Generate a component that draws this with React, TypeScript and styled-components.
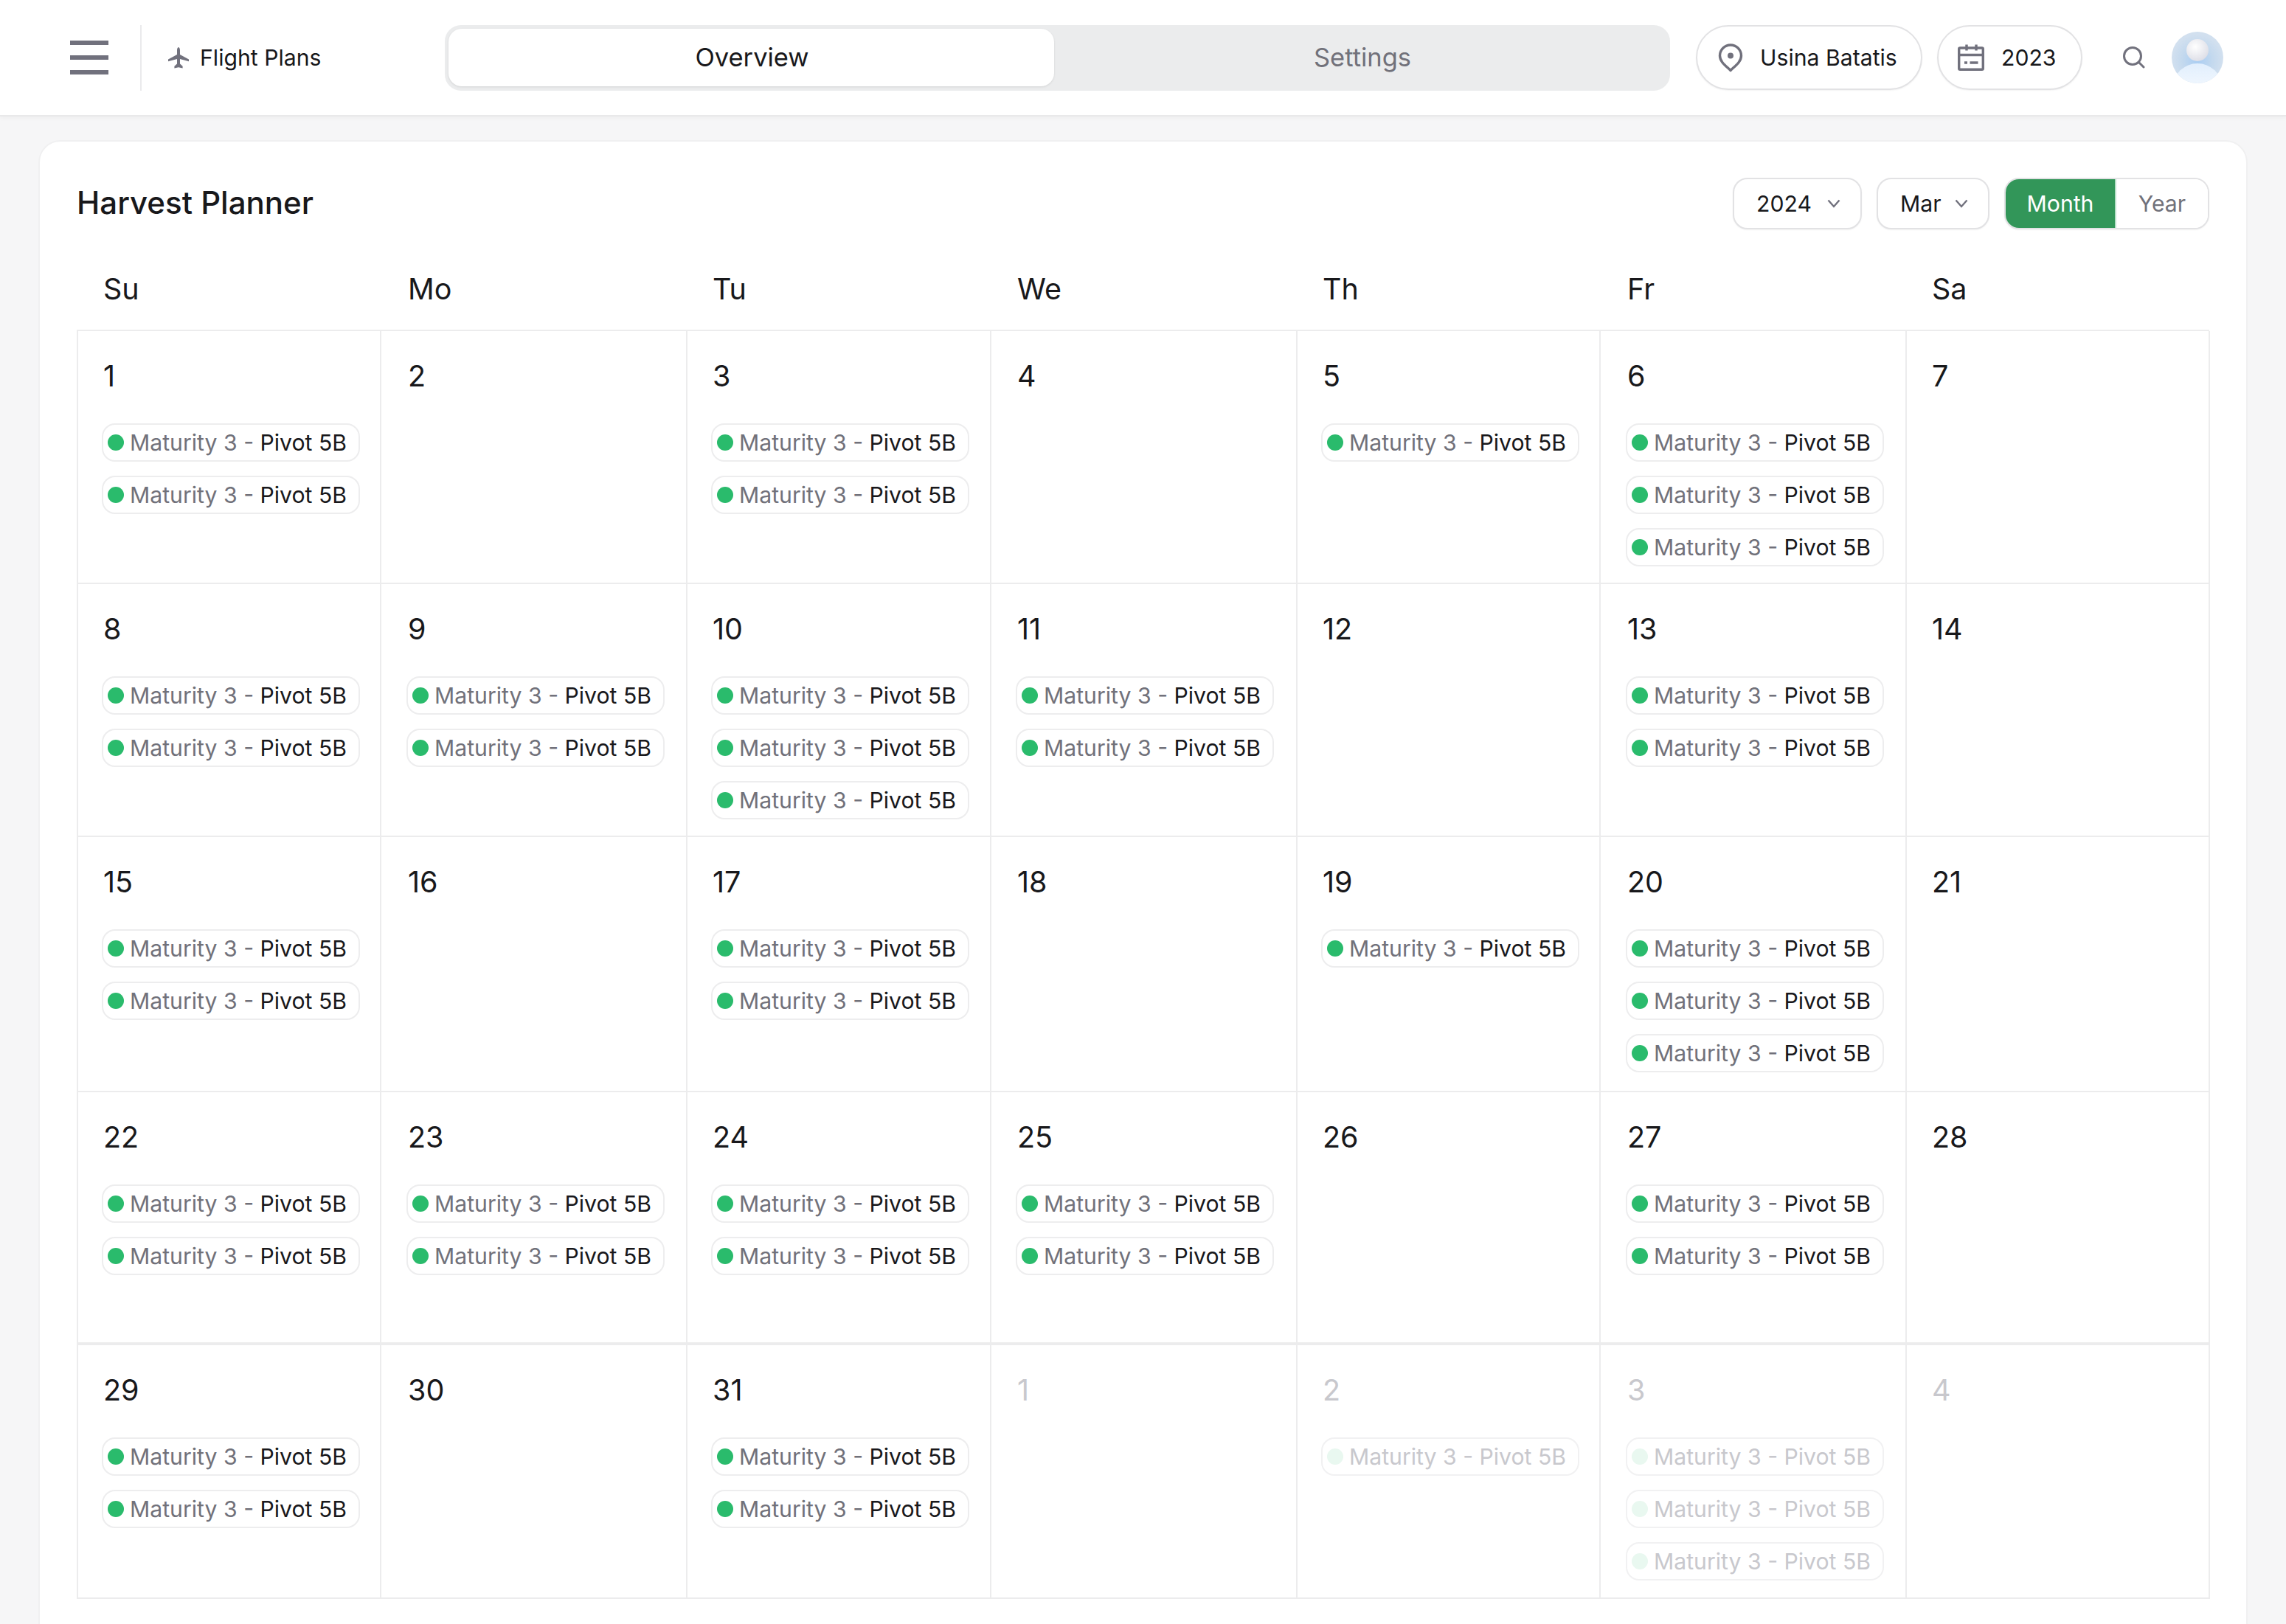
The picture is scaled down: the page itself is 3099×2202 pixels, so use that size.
import React from "react";
import styled, { createGlobalStyle } from "styled-components";

type Day = { label: number; plans: number; muted?: boolean };

const DAYS: Day[] = [
	{ label: 1, plans: 2 },
	{ label: 2, plans: 0 },
	{ label: 3, plans: 2 },
	{ label: 4, plans: 0 },
	{ label: 5, plans: 1 },
	{ label: 6, plans: 3 },
	{ label: 7, plans: 0 },
	{ label: 8, plans: 2 },
	{ label: 9, plans: 2 },
	{ label: 10, plans: 3 },
	{ label: 11, plans: 2 },
	{ label: 12, plans: 0 },
	{ label: 13, plans: 2 },
	{ label: 14, plans: 0 },
	{ label: 15, plans: 2 },
	{ label: 16, plans: 0 },
	{ label: 17, plans: 2 },
	{ label: 18, plans: 0 },
	{ label: 19, plans: 1 },
	{ label: 20, plans: 3 },
	{ label: 21, plans: 0 },
	{ label: 22, plans: 2 },
	{ label: 23, plans: 2 },
	{ label: 24, plans: 2 },
	{ label: 25, plans: 2 },
	{ label: 26, plans: 0 },
	{ label: 27, plans: 2 },
	{ label: 28, plans: 0 },
	{ label: 29, plans: 2 },
	{ label: 30, plans: 0 },
	{ label: 31, plans: 2 },
	{ label: 1, plans: 0, muted: true },
	{ label: 2, plans: 1, muted: true },
	{ label: 3, plans: 3, muted: true },
	{ label: 4, plans: 0, muted: true },
];

const WEEK = ["Su", "Mo", "Tu", "We", "Th", "Fr", "Sa"];

const COLUMNS = "411px 415px 412px 415px 411px 415px 411px";

// the dividers sit unevenly but the content keeps a regular pitch
const INSETS = [32, 34, 32, 33, 32, 34, 32];

const PlaneIcon = () => (
	<svg width="28" height="29" viewBox="0 0 28 29" fill="#71717d">
		<path d="M14 0c1.3 0 2 2.2 2 4.5v5.6l12 6.4v2.7l-12-3.2v6.6l3.6 3.2v2.7L14 27.2l-5.600 1.300v-2.700l3.600-3.200v-6.600L0 19.200v-2.700l12-6.400V4.500C12 2.200 12.700 0 14 0z" />
	</svg>
);

const PinIcon = () => (
	<svg width="34" height="39" viewBox="0 0 34 39" fill="none">
		<path
			d="M17 36.500 C11 30.500 2.500 25 2.500 16.500 C2.500 8.500 9 2 17 2 C25 2 31.500 8.500 31.500 16.500 C31.500 25 23 30.500 17 36.500 Z"
			stroke="#71717d"
			strokeWidth="3.400"
			strokeLinejoin="round"
		/>
		<circle cx="17" cy="16.500" r="4" fill="#71717d" />
	</svg>
);

const CalendarIcon = () => (
	<svg width="36" height="36" viewBox="0 0 36 36" fill="none" stroke="#71717d" strokeWidth="3.400">
		<rect x="1.700" y="5" width="32.600" height="29.300" rx="1.500" />
		<path d="M1.700 14.500h32.600M12 0.500v8M25 0.500v8" />
		<path d="M9 25h4M16.500 25h11" />
	</svg>
);

const SearchIcon = () => (
	<svg width="30" height="30" viewBox="0 0 30 30" fill="none" stroke="#71717d" strokeWidth="3" strokeLinecap="round">
		<circle cx="13" cy="13" r="11.500" />
		<path d="M21.500 21.500L28 28" />
	</svg>
);

const ChevronIcon = () => (
	<svg width="18" height="12" viewBox="0 0 18 12" fill="none" stroke="#71717d" strokeWidth="2.400">
		<path d="M1.500 1.500L9 10l7.500-8.500" />
	</svg>
);

const AvatarIcon = () => (
	<svg width="70" height="70" viewBox="0 0 70 70">
		<defs>
			<radialGradient id="avatarBack" cx="50%" cy="55%" r="50%">
				<stop offset="0%" stopColor="#a9cdf3" />
				<stop offset="60%" stopColor="#c4d9ee" />
				<stop offset="100%" stopColor="#d2e0ef" />
			</radialGradient>
			<linearGradient id="avatarBody" x1="0" y1="0" x2="0" y2="1">
				<stop offset="0%" stopColor="#e2effd" />
				<stop offset="100%" stopColor="#ffffff" />
			</linearGradient>
			<radialGradient id="avatarHead" cx="40%" cy="35%" r="70%">
				<stop offset="0%" stopColor="#ffffff" />
				<stop offset="100%" stopColor="#dcdde6" />
			</radialGradient>
			<clipPath id="avatarClip">
				<circle cx="35" cy="35" r="35" />
			</clipPath>
		</defs>
		<circle cx="35" cy="35" r="35" fill="url(#avatarBack)" />
		<g clipPath="url(#avatarClip)">
			<ellipse cx="35" cy="75" rx="33" ry="32" fill="url(#avatarBody)" />
		</g>
		<circle cx="35" cy="25" r="15" fill="url(#avatarHead)" />
	</svg>
);

const Plan = ({ muted }: { muted?: boolean }) => (
	<PlanChip $muted={muted}>
		<PlanDot $muted={muted} />
		<PlanKind $muted={muted}>Maturity 3 -&nbsp;</PlanKind>
		<PlanName $muted={muted}>Pivot 5B</PlanName>
	</PlanChip>
);

export default function App() {
	return (
		<>
			<GlobalStyle />
			<Page>
				<TopBar>
					<MenuButton>
						<span />
						<span />
						<span />
					</MenuButton>
					<BarDivider />
					<SectionLabel>
						<PlaneIcon />
						Flight Plans
					</SectionLabel>
					<Tabs>
						<Tab $active>Overview</Tab>
						<Tab>Settings</Tab>
					</Tabs>
					<PillGroup>
						<Pill $width={307} $inset={28} $gap={23}>
							<PinIcon />
							Usina Batatis
						</Pill>
						<Pill $width={197} $inset={26} $gap={23}>
							<CalendarIcon />
							2023
						</Pill>
					</PillGroup>
					<SearchSlot>
						<SearchIcon />
					</SearchSlot>
					<AvatarSlot>
						<AvatarIcon />
					</AvatarSlot>
				</TopBar>

				<Card>
					<CardHead>
						<Title>Harvest Planner</Title>
						<Controls>
							<Select $width={175}>
								2024
								<ChevronIcon />
							</Select>
							<Select $width={153}>
								Mar
								<ChevronIcon />
							</Select>
							<ModeToggle>
								<ModeOption $active>Month</ModeOption>
								<ModeOption>Year</ModeOption>
							</ModeToggle>
						</Controls>
					</CardHead>

					<WeekRow>
						{WEEK.map((d, i) => (
							<WeekDay key={d} $inset={INSETS[i] + 4}>
								{d}
							</WeekDay>
						))}
					</WeekRow>

					<MonthGrid>
						{DAYS.map((d, i) => (
							<Cell key={i} $inset={INSETS[i % 7]} $beforeLast={i >= 21 && i < 28}>
								<DayNumber $muted={d.muted}>{d.label}</DayNumber>
								<PlanList>
									{Array.from({ length: d.plans }).map((_, n) => (
										<Plan key={n} muted={d.muted} />
									))}
								</PlanList>
							</Cell>
						))}
					</MonthGrid>
				</Card>
			</Page>
		</>
	);
}

const GlobalStyle = createGlobalStyle`
	html, body {
		margin: 0;
		padding: 0;
		background: #f6f6f7;
	}

	* {
		box-sizing: border-box;
	}
`;

const Page = styled.div`
	width: 3099px;
	height: 2202px;
	overflow: hidden;
	background: #f6f6f7;
	font-family: Inter, "Liberation Sans", sans-serif;
	color: #18181b;
`;

const TopBar = styled.header`
	display: flex;
	align-items: center;
	height: 158px;
	padding-left: 95px;
	background: #fff;
	border-bottom: 2px solid #e9e9ea;
	box-shadow: 0 2px 6px rgba(0, 0, 0, 0.04);
`;

const MenuButton = styled.div`
	display: flex;
	flex-direction: column;
	gap: 14px;
	width: 52px;

	span {
		height: 6px;
		background: #71717d;
	}
`;

const BarDivider = styled.div`
	width: 2px;
	height: 89px;
	margin-left: 43px;
	background: #eaeaec;
`;

const SectionLabel = styled.div`
	display: flex;
	align-items: center;
	gap: 15px;
	width: 411px;
	padding-left: 36px;
	font-size: 30.200px;
`;

const Tabs = styled.div`
	display: flex;
	width: 1661px;
	height: 89px;
	padding: 5px 5px 6px;
	background: #ebeced;
	border-radius: 22px;
`;

const Tab = styled.div<{ $active?: boolean }>`
	display: flex;
	align-items: center;
	justify-content: center;
	flex: ${p => (p.$active ? "0 0 821px" : "1")};
	padding-left: ${p => (p.$active ? "2px" : "6px")};
	font-size: 34.500px;
	color: ${p => (p.$active ? "#18181b" : "#71717a")};
	background: ${p => (p.$active ? "#fff" : "transparent")};
	border-radius: 18px;
	box-shadow: ${p => (p.$active ? "0 1px 3px rgba(0, 0, 0, 0.1)" : "none")};
`;

const PillGroup = styled.div`
	display: flex;
	gap: 20px;
	margin-left: 35px;
`;

const Pill = styled.div<{ $width: number; $inset: number; $gap: number }>`
	display: flex;
	align-items: center;
	gap: ${p => p.$gap}px;
	width: ${p => p.$width}px;
	height: 88px;
	padding-left: ${p => p.$inset}px;
	font-size: 30.200px;
	background: #fff;
	border: 2px solid #e2e2e4;
	border-radius: 44px;
	box-shadow: 0 1px 2px rgba(0, 0, 0, 0.05);
`;

const SearchSlot = styled.div`
	display: flex;
	margin-left: 55px;
`;

const AvatarSlot = styled.div`
	display: flex;
	margin-left: 36px;
`;

const Card = styled.section`
	width: 2995px;
	min-height: 2100px;
	margin: 32px 0 0 52px;
	padding: 0 50px;
	background: #fff;
	border: 2px solid #f0f0f1;
	border-radius: 30px;
`;

const CardHead = styled.div`
	display: flex;
	align-items: center;
	justify-content: space-between;
	height: 168px;
`;

const Title = styled.h1`
	margin: 0 0 3px;
	font-size: 42px;
	font-weight: 500;
`;

const Controls = styled.div`
	display: flex;
	gap: 20px;
`;

const Select = styled.div<{ $width: number }>`
	display: flex;
	align-items: center;
	justify-content: space-between;
	width: ${p => p.$width}px;
	height: 70px;
	padding: 0 27px 0 30px;
	font-size: 30.200px;
	background: #fff;
	border: 2px solid #e2e2e4;
	border-radius: 20px;
	box-shadow: 0 1px 2px rgba(0, 0, 0, 0.05);
`;

const ModeToggle = styled.div`
	display: flex;
	width: 278px;
	height: 70px;
	overflow: hidden;
	background: #fff;
	border: 2px solid #e2e2e4;
	border-radius: 20px;
	box-shadow: 0 1px 2px rgba(0, 0, 0, 0.05);
`;

const ModeOption = styled.div<{ $active?: boolean }>`
	display: flex;
	align-items: center;
	justify-content: center;
	flex: ${p => (p.$active ? "0 0 150px" : "1")};
	font-size: 30.200px;
	color: ${p => (p.$active ? "#fff" : "#71717a")};
	background: ${p => (p.$active ? "#329659" : "#fff")};
	border-right: ${p => (p.$active ? "2px solid #b8e0c8" : "none")};
`;

const WeekRow = styled.div`
	display: grid;
	grid-template-columns: ${COLUMNS};
	align-items: start;
	height: 87px;
	padding-top: 8px;
`;

const WeekDay = styled.div<{ $inset: number }>`
	padding-left: ${p => p.$inset}px;
	font-size: 39.500px;
	line-height: 48px;
`;

const MonthGrid = styled.div`
	display: grid;
	grid-template-columns: ${COLUMNS};
	grid-template-rows: 343px 343px 346px 343px 344px;
	border-top: 2px solid #ececed;
	border-left: 2px solid #ececed;
`;

const Cell = styled.div<{ $inset: number; $beforeLast?: boolean }>`
	padding: 37px 0 0 ${p => p.$inset}px;
	border-right: 2px solid #ececed;
	border-bottom: ${p => (p.$beforeLast ? "4px" : "2px")} solid #ececed;
`;

const DayNumber = styled.div<{ $muted?: boolean }>`
	height: 48px;
	padding-left: 2px;
	font-size: 39.500px;
	line-height: 48px;
	color: ${p => (p.$muted ? "#c8c8cd" : "#18181b")};
`;

const PlanList = styled.div`
	display: flex;
	flex-direction: column;
	align-items: flex-start;
	gap: 19px;
	margin-top: 40px;
`;

const PlanChip = styled.div<{ $muted?: boolean }>`
	display: inline-flex;
	align-items: center;
	height: 52px;
	padding: 0 16px 0 6px;
	font-size: 30.200px;
	white-space: nowrap;
	background: #fff;
	border: 2px solid ${p => (p.$muted ? "#f1f1f2" : "#ededee")};
	border-radius: 18px;
`;

const PlanDot = styled.span<{ $muted?: boolean }>`
	flex: none;
	width: 22px;
	height: 22px;
	margin-right: 8px;
	border-radius: 50%;
	background: ${p => (p.$muted ? "#e9f8f0" : "#2abb6c")};
`;

const PlanKind = styled.span<{ $muted?: boolean }>`
	color: ${p => (p.$muted ? "#c8c8cd" : "#71717a")};
`;

const PlanName = styled.span<{ $muted?: boolean }>`
	color: ${p => (p.$muted ? "#c8c8cd" : "#18181b")};
`;
